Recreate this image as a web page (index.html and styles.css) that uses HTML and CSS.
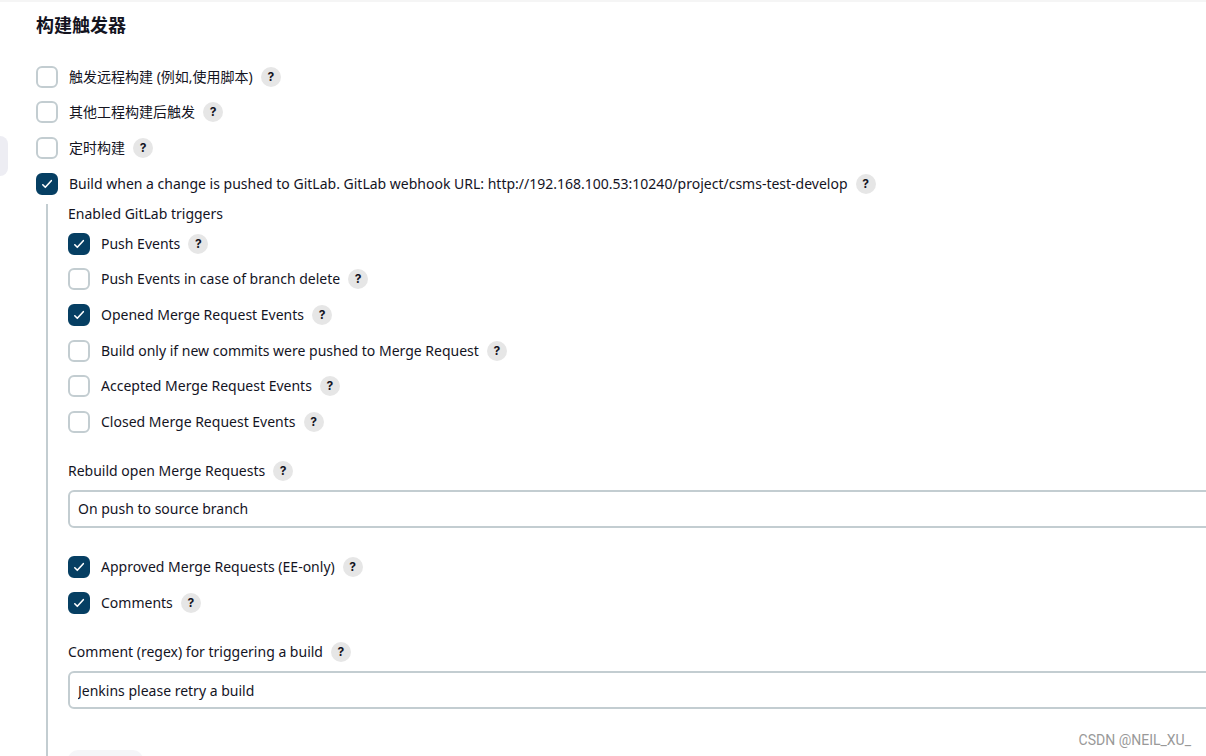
FILE: index.html
```html
<!DOCTYPE html>
<html lang="en">
<head>
  <meta charset="UTF-8" />
  <meta name="viewport" content="width=device-width, initial-scale=1.0" />
  <title>构建触发器</title>
  <link rel="stylesheet" href="styles.css">
</head>
<body>
  <div class="side-tab"></div>

  <main class="config">
    <h2 class="section-title" lang="zh-CN">构建触发器</h2>

    <div class="options">
      <div class="option">
        <input type="checkbox" class="check" id="remote" />
        <label for="remote" lang="zh-CN">触发远程构建 (例如,使用脚本)</label>
        <button type="button" class="help">?</button>
      </div>
      <div class="option">
        <input type="checkbox" class="check" id="upstream" />
        <label for="upstream" lang="zh-CN">其他工程构建后触发</label>
        <button type="button" class="help">?</button>
      </div>
      <div class="option">
        <input type="checkbox" class="check" id="timer" />
        <label for="timer" lang="zh-CN">定时构建</label>
        <button type="button" class="help">?</button>
      </div>
      <div class="option">
        <input type="checkbox" class="check" id="gitlab" checked />
        <label for="gitlab">Build when a change is pushed to GitLab. GitLab webhook URL: http://192.168.100.53:10240/project/csms-test-develop</label>
        <button type="button" class="help">?</button>
      </div>
    </div>

    <div class="nested">
      <div class="field-label">Enabled GitLab triggers</div>

      <div class="options">
        <div class="option">
          <input type="checkbox" class="check" id="push" checked />
          <label for="push">Push Events</label>
          <button type="button" class="help">?</button>
        </div>
        <div class="option">
          <input type="checkbox" class="check" id="branchDelete" />
          <label for="branchDelete">Push Events in case of branch delete</label>
          <button type="button" class="help">?</button>
        </div>
        <div class="option">
          <input type="checkbox" class="check" id="openedMr" checked />
          <label for="openedMr">Opened Merge Request Events</label>
          <button type="button" class="help">?</button>
        </div>
        <div class="option">
          <input type="checkbox" class="check" id="newCommits" />
          <label for="newCommits">Build only if new commits were pushed to Merge Request</label>
          <button type="button" class="help">?</button>
        </div>
        <div class="option">
          <input type="checkbox" class="check" id="acceptedMr" />
          <label for="acceptedMr">Accepted Merge Request Events</label>
          <button type="button" class="help">?</button>
        </div>
        <div class="option">
          <input type="checkbox" class="check" id="closedMr" />
          <label for="closedMr">Closed Merge Request Events</label>
          <button type="button" class="help">?</button>
        </div>
      </div>

      <div class="field">
        <div class="field-label">
          <label for="rebuild">Rebuild open Merge Requests</label>
          <button type="button" class="help">?</button>
        </div>
        <select class="control" id="rebuild">
          <option>On push to source branch</option>
        </select>
      </div>

      <div class="options pair">
        <div class="option">
          <input type="checkbox" class="check" id="approvedMr" checked />
          <label for="approvedMr">Approved Merge Requests (EE-only)</label>
          <button type="button" class="help">?</button>
        </div>
        <div class="option">
          <input type="checkbox" class="check" id="comments" checked />
          <label for="comments">Comments</label>
          <button type="button" class="help">?</button>
        </div>
      </div>

      <div class="field">
        <div class="field-label">
          <label for="regex">Comment (regex) for triggering a build</label>
          <button type="button" class="help">?</button>
        </div>
        <input type="text" class="control" id="regex" value="Jenkins please retry a build" />
      </div>

      <button type="button" class="advanced" aria-label="高级"></button>
    </div>
  </main>

  <div class="watermark">CSDN @NEIL_XU_</div>
</body>
</html>
```

FILE: styles.css
```css
* {
  box-sizing: border-box;
}

body {
  margin: 0;
  height: 100vh;
  overflow: hidden;
  border-top: 2px solid #f5f5f5;
  background: #fff;
  color: #14141f;
  font-family: "Noto Sans", "Noto Sans CJK SC", sans-serif;
  font-size: 14px;
  line-height: 20px;
}

/* edge of the collapsed side panel */
.side-tab {
  position: absolute;
  top: 136px;
  left: 0;
  width: 8px;
  height: 40px;
  border-radius: 0 8px 8px 0;
  background: #ededf3;
}

.config {
  height: 100%;
  overflow: hidden;
  padding: 11px 0 0 36px;
}

.section-title {
  margin: 0 0 29px;
  font-size: 18px;
  font-weight: 700;
  line-height: 24px;
}

.options {
  display: grid;
  grid-auto-rows: 35px 36px 36px;
  align-items: start;
}

.options.pair {
  grid-auto-rows: 36px;
}

.option {
  display: flex;
  align-items: center;
  height: 22px;
  white-space: nowrap;
}

.check {
  appearance: none;
  flex: none;
  width: 22px;
  height: 22px;
  margin: 0 11px 0 0;
  border: 2px solid #c3cdd1;
  border-radius: 6px;
  background: #fff;
}

.check:checked {
  border-color: #063f63;
  background: #063f63 url("data:image/svg+xml,%3Csvg xmlns='http://www.w3.org/2000/svg' viewBox='0 0 18 18'%3E%3Cpath d='M4.8 9.8l2.5 2.5 6-6.6' fill='none' stroke='white' stroke-width='1.6' stroke-linecap='round' stroke-linejoin='round'/%3E%3C/svg%3E") center / 18px no-repeat;
}

.help {
  flex: none;
  width: 20px;
  height: 20px;
  margin-left: 8px;
  padding: 0;
  border: 0;
  border-radius: 50%;
  background: #e6e6e6;
  color: #14141f;
  font-family: Inter, sans-serif;
  font-size: 12px;
  font-weight: 700;
  line-height: 20px;
  text-align: center;
}

.nested {
  margin: -4px 0 0 10px;
  padding: 0 0 20px 20px;
  border-left: 2px solid #c3cdd1;
}

.field-label {
  display: flex;
  align-items: center;
  margin-bottom: 9px;
}

.field {
  margin: 14px 0 28px;
}

/* fields run on past the right edge of the window */
.control {
  appearance: none;
  display: block;
  width: calc(100% + 20px);
  height: 38px;
  padding: 0 8px;
  border: 2px solid #c3cdd1;
  border-radius: 6px;
  background: #fff;
  color: inherit;
  font: inherit;
}

.advanced {
  display: block;
  width: 75px;
  height: 36px;
  margin-top: 41px;
  border: 0;
  border-radius: 10px;
  background: #f5f5f8;
}

.watermark {
  position: absolute;
  right: 15px;
  bottom: 6px;
  color: #999;
  font-family: Roboto, Arial, sans-serif;
  font-size: 14px;
}
```
